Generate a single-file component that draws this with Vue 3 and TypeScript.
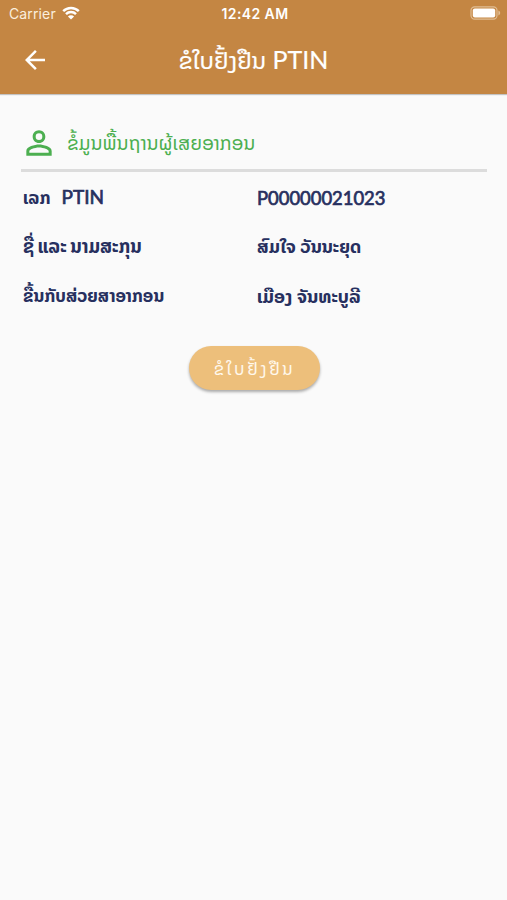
<script setup lang="ts">
interface InfoRow {
  label: string
  suffix?: string
  value: string
  kind: string
}

const rows: InfoRow[] = [
  { label: 'ເລກ', suffix: 'PTIN', value: 'P00000021023', kind: 'number' },
  { label: 'ຊື່ ແລະ ນາມສະກຸນ', value: 'ສົມໃຈ ວັນນະຍຸດ', kind: 'name' },
  { label: 'ຂື້ນກັບສ່ວຍສາອາກອນ', value: 'ເມືອງ ຈັນທະບູລີ', kind: 'office' },
]
</script>

<template>
  <div class="screen">
    <header class="top">
      <div class="status">
        <div class="carrier">
          <span>Carrier</span>
          <svg class="wifi" viewBox="0 0 18 14">
            <path d="M1.2 5.2a11.2 11.2 0 0 1 15.6 0" />
            <path d="M4 8.1a7.2 7.2 0 0 1 10 0" />
            <path class="dot" d="M9 13.6 5.9 10.5a4.4 4.4 0 0 1 6.2 0z" />
          </svg>
        </div>
        <span class="clock">12:42 AM</span>
        <svg class="battery" viewBox="0 0 31 14">
          <rect class="case" x="1" y="0.8" width="26" height="12.4" rx="3.6" />
          <rect class="charge" x="2.8" y="2.6" width="22.4" height="8.8" rx="2" />
          <path class="cap" d="M28.4 4.6c2.4.8 2.4 4 0 4.8z" />
        </svg>
      </div>
      <div class="bar">
        <button class="back" aria-label="Back">
          <svg viewBox="0 0 24 24"><path d="M20 11H7.83l5.59-5.59L12 4l-8 8 8 8 1.41-1.41L7.83 13H20v-2z" /></svg>
        </button>
        <h1 class="title"><span class="title-lao">ຂໍໃບຢັ້ງຢືນ</span> PTIN</h1>
      </div>
    </header>

    <main class="content">
      <section class="heading">
        <svg class="person" viewBox="0 0 24 24"><path d="M12 5.9a2.1 2.1 0 1 1 0 4.2 2.1 2.1 0 0 1 0-4.2m0 9c2.97 0 6.1 1.46 6.1 2.1v1.1H5.9V17c0-.64 3.13-2.1 6.1-2.1M12 4C9.79 4 8 5.79 8 8s1.79 4 4 4 4-1.79 4-4-1.79-4-4-4m0 9c-2.67 0-8 1.34-8 4v3h16v-3c0-2.66-5.33-4-8-4" /></svg>
        <h2>ຂໍ້ມູນພື້ນຖານຜູ້ເສຍອາກອນ</h2>
      </section>

      <dl class="rows">
        <div v-for="row in rows" :key="row.kind" class="row" :class="row.kind">
          <dt><span>{{ row.label }}</span><span v-if="row.suffix" class="latin">{{ row.suffix }}</span></dt>
          <dd><span>{{ row.value }}</span></dd>
        </div>
      </dl>

      <button class="submit"><span>ຂໍໃບຢັ້ງຢືນ</span></button>
    </main>
  </div>
</template>

<style>
body {
  background: #fafafa;
}
</style>

<style scoped>
.screen {
  min-height: 900px;
  background: #fafafa;
  font-family: Lato, "Noto Sans Lao", "Phetsarath OT", "DejaVu Sans", sans-serif;
}
.top {
  height: 94px;
  background: #c48643;
  color: #fff;
  box-shadow: 0 1px 1px rgba(0, 0, 0, 0.22);
}
.status {
  display: grid;
  grid-template-columns: 1fr auto 1fr;
  align-items: center;
  height: 27px;
  padding: 0 6px 0 9px;
  font: 14px/27px Inter, sans-serif;
}
.carrier {
  display: flex;
  align-items: center;
  gap: 6px;
  color: #fbeedd;
  letter-spacing: 0.13px;
}
.wifi {
  width: 18px;
  height: 14px;
  margin-top: -1px;
  fill: none;
  stroke: #fff;
  stroke-width: 2.5;
}
.wifi .dot {
  fill: #fff;
  stroke: none;
}
.clock {
  font-weight: 600;
  font-size: 14px;
  letter-spacing: 0.4px;
}
.battery {
  width: 31px;
  height: 14px;
  justify-self: end;
  margin-top: -1px;
}
.case {
  fill: none;
  stroke: #e0bd94;
  stroke-width: 1.2;
}
.charge {
  fill: #fff;
}
.cap {
  fill: #e0bd94;
}
.bar {
  display: grid;
  grid-template-columns: 70px 1fr 70px;
  align-items: center;
  height: 65px;
}
button {
  border: 0;
  font-family: inherit;
}
.back {
  display: flex;
  justify-content: center;
  padding: 0;
  background: none;
}
.back svg {
  width: 30px;
  height: 30px;
  fill: #fff;
}
.title {
  margin: 0;
  text-align: center;
  white-space: nowrap;
  font-size: 25px;
  font-weight: 400;
  line-height: 40px;
  -webkit-text-stroke: 0.2px #fff;
}
.title-lao {
  font-size: 23.5px;
}
.content {
  display: flex;
  flex-direction: column;
  padding: 25px 20px 0 20px;
}
.heading {
  display: flex;
  align-items: center;
  gap: 9px;
  height: 50px;
  margin-left: 1px;
  border-bottom: 3px solid #dcdcdc;
  color: #4caf50;
}
.person {
  width: 38px;
  height: 38px;
  margin: -2px 0 0 -1px;
  fill: #4caf50;
}
h2 {
  margin: -2px 0 0;
  font-size: 19.3px;
  font-weight: 400;
  white-space: nowrap;
}
.rows {
  margin: 1px 0 0 1px;
}
.row {
  display: grid;
  grid-template-columns: 234px 1fr;
  align-items: center;
  height: 49px;
  padding-left: 2px;
  color: #27305f;
  font-size: 17.4px;
  font-weight: 700;
  white-space: nowrap;
}
dd {
  margin: 0;
}
.latin {
  margin-left: 11px;
  font-size: 19px;
  font-weight: 400;
  -webkit-text-stroke: 0.7px #27305f;
}
.number dd {
  font-size: 18.4px;
  font-weight: 400;
  -webkit-text-stroke: 0.7px #27305f;
}
.name dt {
  font-size: 18.5px;
  word-spacing: -1px;
}
.name dd,
.office dd {
  font-size: 17.9px;
}
.office dd {
  font-size: 18.2px;
}
.submit {
  align-self: center;
  width: 131px;
  height: 44px;
  margin: 26px 0 0 1px;
  padding: 1px 0 0 1px;
  border-radius: 22px;
  background: #edbf7b;
  color: #fff8ec;
  font-size: 17px;
  letter-spacing: 2.6px;
  box-shadow: 0 2px 3px rgba(0, 0, 0, 0.32);
}
</style>
